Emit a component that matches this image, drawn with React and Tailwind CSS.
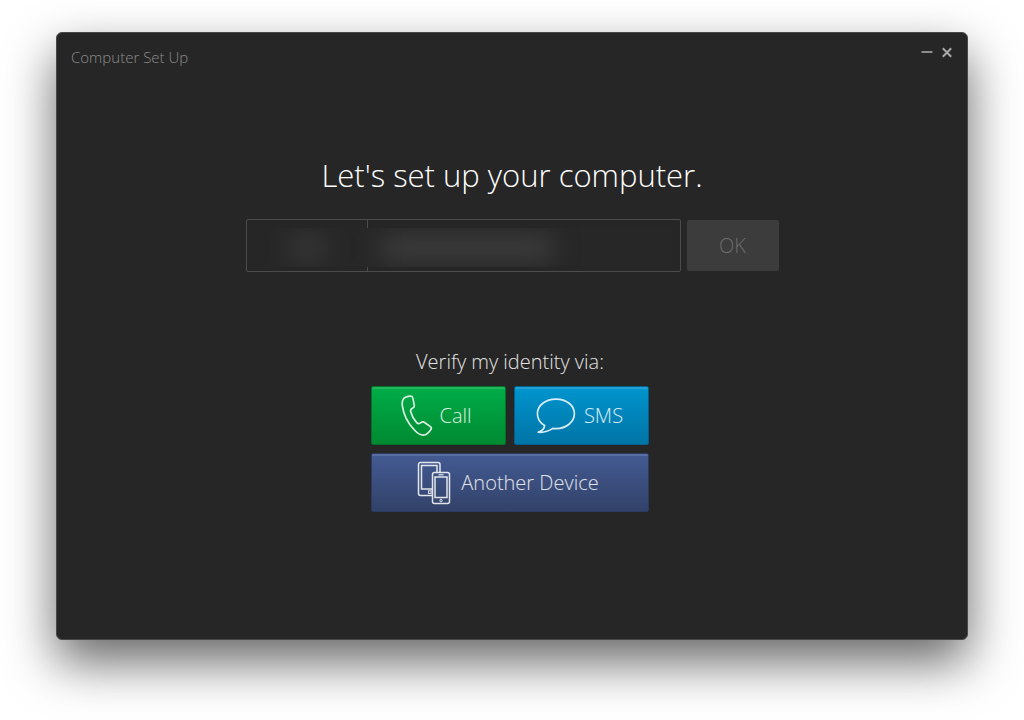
import clsx from 'clsx'

function PhoneIcon() {
  return (
    <svg width="32" height="42" viewBox="0 0 32 42" fill="none" stroke="currentColor" strokeWidth="1.7" strokeLinejoin="round" aria-hidden="true">
      <path d="M4.5 2.3C6.8 1.3 9.6 1 11 1.5C12.1 1.9 12.7 8.2 13.3 10.6C13.6 12 12.7 12.6 11.4 13.2C9.6 14 9.3 15 9.8 17C10.8 20.8 13.2 25 15.7 27.7C16.8 28.9 18 28.9 19.4 27.9C21 26.7 22 26.3 23.3 27.2L29.4 31.6C30.6 32.5 30.6 33.4 29.9 34.4C28 37.2 26 39.4 23.4 40C20.6 40.6 16.6 38.4 13.4 35C7.2 28.6 2.4 19.2 1.3 10.4C.9 6.4 1.6 3.6 4.5 2.3Z" />
    </svg>
  )
}

function BubbleIcon() {
  return (
    <svg width="40" height="36" viewBox="0 0 40 36" fill="none" stroke="currentColor" strokeWidth="1.7" strokeLinejoin="round" aria-hidden="true">
      <path d="M20 1.2C30.3 1.2 38.4 7.2 38.4 15.6C38.4 24 30.3 30.6 20 30.6C18.9 30.6 17.8 30.5 16.8 30.4C12.6 33.2 7.4 34.8 2.2 34.2C5.8 33 8.4 30.4 8.6 27.6C4.2 25 1.4 20.8 1.4 15.6C1.4 7.2 9.7 1.2 20 1.2Z" />
    </svg>
  )
}

function DevicesIcon() {
  return (
    <svg width="34" height="44" viewBox="0 0 34 44" fill="none" stroke="currentColor" strokeWidth="1.5" aria-hidden="true">
      {/* tablet */}
      <path d="M15 34.5H3.5a2 2 0 0 1-2-2V3.5a2 2 0 0 1 2-2H21a2 2 0 0 1 2 2V11" />
      <path d="M15 28H4.5V4.5H20V11" />
      <rect x="11.5" y="29.8" width="2.6" height="2.6" strokeWidth="1" />
      {/* phone */}
      <rect x="15.5" y="11.5" width="17" height="31" rx="2" />
      <rect x="18" y="16" width="12" height="20.5" />
      <path d="M21.5 13.8h5" strokeWidth="1.2" />
      <circle cx="24" cy="39.5" r="1.2" strokeWidth="1" />
    </svg>
  )
}

const TONES = {
  green: 'border-[#02722a] bg-linear-to-b from-[#00ad48] to-[#008a32]',
  blue:  'border-[#02618c] bg-linear-to-b from-[#0095ce] to-[#0074a6]',
  navy:  'border-[#2b3a63] bg-linear-to-b from-[#435a94] to-[#324268]',
}

function VerifyButton({ tone, icon, className, children }) {
  return (
    <button
      type="button"
      className={clsx(
        'flex h-[59px] items-center justify-center rounded-xs border pr-1 text-xl text-white/85 shadow-[inset_0_2px_0_rgba(255,255,255,0.12)]',
        TONES[tone],
        className,
      )}
    >
      {icon}
      {children}
    </button>
  )
}

function PhoneForm() {
  return (
    <form className="flex w-full max-w-[533px] items-center gap-1.5" onSubmit={(e) => e.preventDefault()}>
      <div className="relative flex h-[53px] min-w-0 flex-1 rounded-xs border border-[#4c4c4c]">
        <input
          type="text"
          aria-label="Country code"
          className="w-[120px] bg-transparent px-4 text-xl text-white outline-none"
        />
        <input
          type="tel"
          aria-label="Phone number"
          className="min-w-0 flex-1 border-l border-[#4c4c4c] bg-transparent px-4 text-xl text-white outline-none"
        />
        {/* masked number */}
        <div className="pointer-events-none absolute top-2 right-2 bottom-1 left-6 overflow-hidden bg-[#272727]">
          <div className="absolute top-2 left-4 h-6 w-10 rounded-full bg-[#383838] blur-md" />
          <div className="absolute top-2 left-27 h-6 w-44 rounded-full bg-[#3e3e3e] blur-md" />
        </div>
      </div>
      <button type="submit" disabled className="h-[51px] w-[92px] rounded-xs bg-[#3c3c3c] text-xl text-[#6c6c6c]">
        OK
      </button>
    </form>
  )
}

function App() {
  return (
    <div className="flex min-h-screen flex-col bg-white px-14 pt-8 pb-20 font-['Open_Sans',sans-serif] font-light">
      <div className="flex flex-1 flex-col rounded-md border border-[#484848] bg-[#262626] shadow-[0_22px_50px_rgba(0,0,0,0.6)]">
        <header className="flex items-start justify-between px-3.5 pt-3">
          <p className="text-[15px] leading-6 text-[#8c8c8c]">Computer Set Up</p>
          <div className="flex gap-2 text-[#a8a8a8]">
            <button type="button" aria-label="Minimize">
              <svg width="12" height="14" viewBox="0 0 12 14" stroke="currentColor" strokeWidth="1.6" aria-hidden="true">
                <path d="M.5 7h11" />
              </svg>
            </button>
            <button type="button" aria-label="Close">
              <svg width="12" height="14" viewBox="0 0 12 14" stroke="currentColor" strokeWidth="2" aria-hidden="true">
                <path d="M1.8 3.3l8.4 8.4M10.2 3.3l-8.4 8.4" />
              </svg>
            </button>
          </div>
        </header>

        <main className="flex flex-col items-center px-4 pt-[86px]">
          <h1 className="text-[31px] leading-10 text-white">Let's set up your computer.</h1>
          <div className="flex w-full justify-center pt-6">
            <PhoneForm />
          </div>

          <section className="flex flex-col items-center pt-[76px] pr-1">
            <h2 className="text-xl text-[#e4e4e4]">Verify my identity via:</h2>
            <div className="grid grid-cols-2 gap-2 pt-2.5">
              <VerifyButton tone="green" icon={<PhoneIcon />} className="w-[135px] gap-1.5">Call</VerifyButton>
              <VerifyButton tone="blue" icon={<BubbleIcon />} className="w-[135px] gap-2">SMS</VerifyButton>
              <VerifyButton tone="navy" icon={<DevicesIcon />} className="col-span-2 gap-2.5">Another Device</VerifyButton>
            </div>
          </section>
        </main>
      </div>
    </div>
  )
}

export default App
